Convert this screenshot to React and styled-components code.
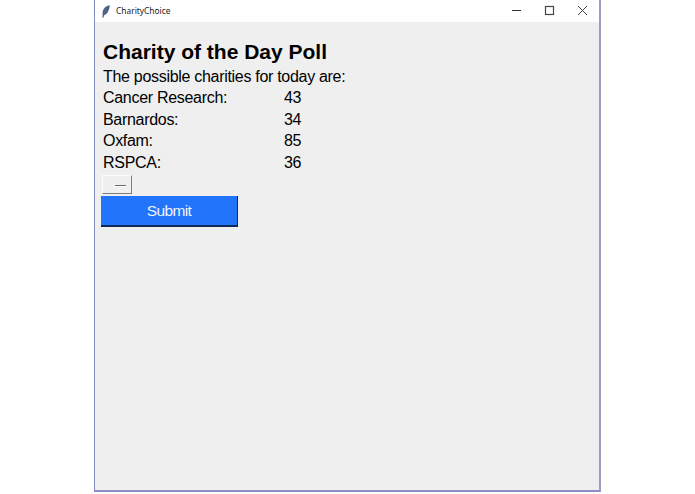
import React from "react";
import styled, { createGlobalStyle } from "styled-components";

const Global = createGlobalStyle`
  html, body { margin: 0; padding: 0; background: #fff; }
  body { font-family: "Liberation Sans", Arial, sans-serif; color: #000; width: 695px; height: 494px; overflow: hidden; }
`;
const Page = styled.div`
  width: 695px; height: 494px; display: flex; justify-content: flex-start; padding-left: 94px; box-sizing: border-box;
`;
const Win = styled.div`
  width: 507px; height: 492px; box-sizing: border-box; display: flex; flex-direction: column;
  border: 1px solid #8488c6; border-top: none; border-right: 2px solid #9a9cc8; border-bottom: 2px solid #8c8fc6; background: #efefef;
`;
const TitleBar = styled.div`
  height: 22px; flex: none; background: #fff; display: flex; align-items: center; padding-left: 7px;
`;
const Title = styled.span`
  font-family: "Noto Sans", "Open Sans", sans-serif; font-size: 8.4px; color: #222; margin-left: 6px; flex: 1; margin-top: -1px;
`;
const Ctl = styled.svg`
  width: 33px; height: 22px; flex: none;
`;
const Body = styled.div`
  flex: 1; padding: 18px 0 0 6px; display: flex; flex-direction: column; align-items: flex-start;
`;
const Heading = styled.h1`
  margin: 0 0 0 2px; font-size: 21px; line-height: 24px; font-weight: 700; height: 25.5px;
`;
const Row = styled.div`
  display: flex; margin-left: 2px; font-size: 16px; letter-spacing: -0.3px; line-height: 21.6px; height: 21.6px; white-space: nowrap;
`;
const Name = styled.span`
  width: 181px;
`;
const SmallButton = styled.div`
  width: 30px; height: 19px; margin: 2px 0 2px 1px; box-sizing: border-box; background: #f0f0f0;
  border: 1px solid; border-color: #fbfbfb #7d7d7d #7d7d7d #fbfbfb; display: flex; align-items: center; justify-content: flex-end; padding-right: 5px;
`;
const Dash = styled.i`
  display: block; width: 11px; height: 2px; background: linear-gradient(#6a6a6a 50%, #fff 50%); margin-top: 3px;
`;
const Submit = styled.button`
  width: 137px; height: 31px; padding: 1px 0 0; box-sizing: border-box; background: #2274fb; color: #eef4ff;
  border: none; border-right: 1px solid #0b2a55; border-bottom: 2px solid #0b2a55;
  font-family: "Liberation Sans", Arial, sans-serif; font-size: 15.5px; letter-spacing: -0.6px;
`;

const rows = [["Cancer Research:", 43], ["Barnardos:", 34], ["Oxfam:", 85], ["RSPCA:", 36]];

export default function App() {
  return (
    <Page>
      <Global />
      <Win>
        <TitleBar>
          <svg width="8" height="13" viewBox="0 0 8 13">
            <path d="M7.8 0.3C4 0.6 0.8 3.6 0.6 8L0.5 12.8L1.5 12.8L2 10.2C5.4 9.8 7.4 5 7.8 0.3Z" fill="#4f6384" />
          </svg>
          <Title>CharityChoice</Title>
          <Ctl viewBox="0 0 33 22"><path d="M12 10.5H21" stroke="#333" strokeWidth="1" /></Ctl>
          <Ctl viewBox="0 0 33 22"><rect x="12.5" y="6.5" width="8" height="8" fill="none" stroke="#444" strokeWidth="1.2" /></Ctl>
          <Ctl viewBox="0 0 33 22"><path d="M12 6L21 15M21 6L12 15" stroke="#444" strokeWidth="1" /></Ctl>
        </TitleBar>
        <Body>
          <Heading>Charity of the Day Poll</Heading>
          <Row>The possible charities for today are:</Row>
          {rows.map(([n, v]) => (
            <Row key={n}><Name>{n}</Name><span>{v}</span></Row>
          ))}
          <SmallButton><Dash /></SmallButton>
          <Submit>Submit</Submit>
        </Body>
      </Win>
    </Page>
  );
}
